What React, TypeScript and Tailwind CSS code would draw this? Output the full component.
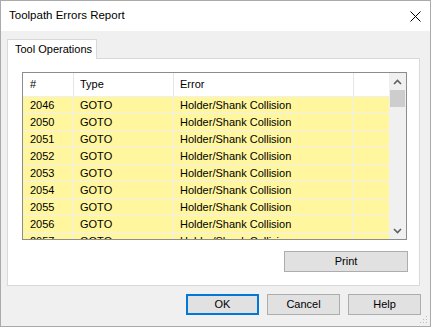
const rows = ["2046", "2050", "2051", "2052", "2053", "2054", "2055", "2056", "2057"];

function Btn({ label, primary, className = "" }: { label: string; primary?: boolean; className?: string }) {
  return (
    <button
      className={
        "flex items-center justify-center bg-[#e1e1e1] text-[11px] text-black " +
        (primary ? "border-2 border-[#0078d7] " : "border border-[#adadad] ") +
        className
      }
    >
      {label}
    </button>
  );
}

export default function App() {
  return (
    <div
      className="w-[431px] h-[327px] flex flex-col border border-[#aaaaaa] bg-[#f0f0f0] text-black"
      style={{ fontFamily: '"Liberation Sans", Arial, sans-serif' }}
    >
      {/* Title bar */}
      <div className="h-[30px] shrink-0 bg-white flex items-center justify-between pl-[8px] pr-[9px]">
        <span className="text-[11.5px]">Toolpath Errors Report</span>
        <svg width="11" height="11" viewBox="0 0 11 11" className="text-black">
          <path d="M0.5 0.5 L10.5 10.5 M10.5 0.5 L0.5 10.5" stroke="currentColor" strokeWidth="1" />
        </svg>
      </div>

      {/* Body */}
      <div className="flex-1 flex flex-col pl-[6px] pr-[10px] pt-[8px] relative">
        {/* Tab */}
        <div className="w-[90px] h-[20px] bg-white border border-b-0 border-[#d9d9d9] flex items-center pl-[7px] text-[11px] whitespace-nowrap relative z-10 -mb-px">
          Tool Operations
        </div>

        {/* Panel */}
        <div className="h-[228px] w-[413px] bg-white border border-[#d9d9d9] pl-[14px] pr-[11px] pt-[13px] flex flex-col">
          {/* List */}
          <div className="h-[168px] w-[385px] border border-[#8c8c8c] flex overflow-hidden">
            <div className="flex-1 flex flex-col overflow-hidden">
              <div className="h-[24px] shrink-0 flex text-[11px] bg-white border-b border-[#f0f0f0]">
                <div className="w-[51px] pl-[7px] flex items-center border-r border-[#e5e5e5]">#</div>
                <div className="w-[100px] pl-[6px] flex items-center border-r border-[#e5e5e5]">Type</div>
                <div className="w-[180px] pl-[6px] flex items-center border-r border-[#e5e5e5]">Error</div>
                <div className="flex-1" />
              </div>
              {rows.map((r) => (
                <div key={r} className="h-[17px] shrink-0 flex text-[11px] bg-[#fff69e] border-b border-[#f0f0f0]">
                  <div className="w-[51px] pl-[7px] flex items-center border-r border-[#f0f0f0]">{r}</div>
                  <div className="w-[100px] pl-[6px] flex items-center border-r border-[#f0f0f0]">GOTO</div>
                  <div className="w-[180px] pl-[6px] flex items-center border-r border-[#f0f0f0]">Holder/Shank Collision</div>
                  <div className="flex-1" />
                </div>
              ))}
            </div>
            {/* Scrollbar */}
            <div className="w-[17px] shrink-0 bg-[#f0f0f0] flex flex-col">
              <div className="h-[17px] flex items-center justify-center">
                <svg width="9" height="6" viewBox="0 0 9 6">
                  <path d="M1 5 L4.5 1.5 L8 5" stroke="#606060" strokeWidth="1.6" fill="none" />
                </svg>
              </div>
              <div className="h-[17px] mx-px bg-[#cdcdcd]" />
              <div className="flex-1" />
              <div className="h-[17px] flex items-center justify-center">
                <svg width="9" height="6" viewBox="0 0 9 6">
                  <path d="M1 1 L4.5 4.5 L8 1" stroke="#606060" strokeWidth="1.6" fill="none" />
                </svg>
              </div>
            </div>
          </div>

          <div className="flex justify-end mt-[11px]">
            <Btn label="Print" className="w-[124px] h-[21px]" />
          </div>
        </div>

        {/* Buttons */}
        <div className="flex justify-end gap-[8px] mt-[8px] -mr-[1px]">
          <Btn label="OK" primary className="w-[73px] h-[21px]" />
          <Btn label="Cancel" className="w-[73px] h-[21px]" />
          <Btn label="Help" className="w-[73px] h-[21px]" />
        </div>

        {/* Resize grip */}
        <svg width="8" height="8" viewBox="0 0 8 8" className="absolute right-[2px] bottom-[2px]">
          <rect x="6" y="0" width="1" height="1" fill="#bcbcbc" />
          <rect x="3" y="3" width="1" height="1" fill="#bcbcbc" />
          <rect x="6" y="3" width="1" height="1" fill="#bcbcbc" />
          <rect x="0" y="6" width="1" height="1" fill="#bcbcbc" />
          <rect x="3" y="6" width="1" height="1" fill="#bcbcbc" />
          <rect x="6" y="6" width="1" height="1" fill="#bcbcbc" />
        </svg>
      </div>
    </div>
  );
}
